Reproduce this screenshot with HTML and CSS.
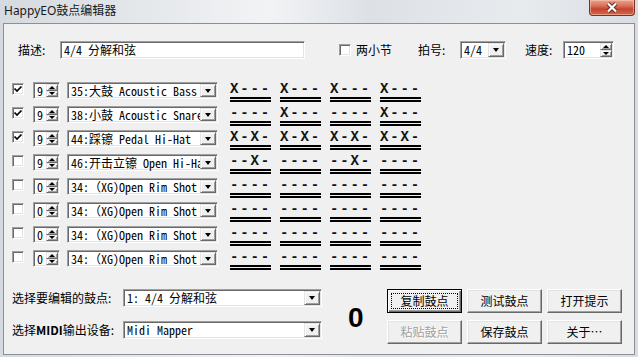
FILE: index.html
```html
<!DOCTYPE html>
<html lang="zh-CN">
<head>
<meta charset="utf-8">
<title>HappyEO鼓点编辑器</title>
<link rel="stylesheet" href="styles.css">
</head>
<body>
<div class="window">
  <div class="titlebar">
    <span class="title">HappyEO鼓点编辑器</span>
    <div class="close">
      <svg width="14" height="11" viewBox="0 0 14 11">
        <path d="M3 1.5 L11 9.5 M11 1.5 L3 9.5" stroke="#6a2c22" stroke-width="4.2" fill="none"/>
        <path d="M3 1.5 L11 9.5 M11 1.5 L3 9.5" stroke="#ffffff" stroke-width="2.2" fill="none"/>
      </svg>
    </div>
  </div>
  <div class="client">
    <div class="toprow">
      <span class="lbl lbl-desc">描述:</span>
      <div class="field sunken desc"><span class="mono">4/4 分解和弦</span></div>
      <div class="check-wrap"><span class="checkbox"></span><span class="lbl">两小节</span></div>
      <span class="lbl lbl-meter">拍号:</span>
      <div class="combo sunken meter"><span class="mono">4/4</span><span class="dropbtn"><i class="tri-down"></i></span></div>
      <span class="lbl lbl-tempo">速度:</span>
      <div class="spin sunken tempo"><span class="mono">120</span><span class="spinbtn"><span class="half"><i class="tri-up"></i></span><span class="half"><i class="tri-down small"></i></span></span></div>
    </div>

    <div class="tracks">
      <div class="track">
        <span class="checkbox"><svg width="10" height="10" viewBox="0 0 10 10"><path d="M1.5 4.5 L4 7 L8.5 2.5" stroke="#000" stroke-width="1.7" fill="none"/></svg></span>
        <div class="spin sunken vol"><span class="mono">9</span><span class="spinbtn"><span class="half"><i class="tri-up"></i></span><span class="half"><i class="tri-down small"></i></span></span></div>
        <div class="combo sunken inst"><span class="mono">35:大鼓 Acoustic Bass</span><span class="dropbtn"><i class="tri-down"></i></span></div>
        <div class="pats">
          <div class="pat"><div class="pat-text">X---</div><div class="pat-lines"></div></div>
          <div class="pat"><div class="pat-text">X---</div><div class="pat-lines"></div></div>
          <div class="pat"><div class="pat-text">X---</div><div class="pat-lines"></div></div>
          <div class="pat"><div class="pat-text">X---</div><div class="pat-lines"></div></div>
        </div>
      </div>
      <div class="track">
        <span class="checkbox"><svg width="10" height="10" viewBox="0 0 10 10"><path d="M1.5 4.5 L4 7 L8.5 2.5" stroke="#000" stroke-width="1.7" fill="none"/></svg></span>
        <div class="spin sunken vol"><span class="mono">9</span><span class="spinbtn"><span class="half"><i class="tri-up"></i></span><span class="half"><i class="tri-down small"></i></span></span></div>
        <div class="combo sunken inst"><span class="mono">38:小鼓 Acoustic Snare</span><span class="dropbtn"><i class="tri-down"></i></span></div>
        <div class="pats">
          <div class="pat"><div class="pat-text">----</div><div class="pat-lines"></div></div>
          <div class="pat"><div class="pat-text">X---</div><div class="pat-lines"></div></div>
          <div class="pat"><div class="pat-text">----</div><div class="pat-lines"></div></div>
          <div class="pat"><div class="pat-text">X---</div><div class="pat-lines"></div></div>
        </div>
      </div>
      <div class="track">
        <span class="checkbox"><svg width="10" height="10" viewBox="0 0 10 10"><path d="M1.5 4.5 L4 7 L8.5 2.5" stroke="#000" stroke-width="1.7" fill="none"/></svg></span>
        <div class="spin sunken vol"><span class="mono">9</span><span class="spinbtn"><span class="half"><i class="tri-up"></i></span><span class="half"><i class="tri-down small"></i></span></span></div>
        <div class="combo sunken inst"><span class="mono">44:踩镲 Pedal Hi-Hat</span><span class="dropbtn"><i class="tri-down"></i></span></div>
        <div class="pats">
          <div class="pat"><div class="pat-text">X-X-</div><div class="pat-lines"></div></div>
          <div class="pat"><div class="pat-text">X-X-</div><div class="pat-lines"></div></div>
          <div class="pat"><div class="pat-text">X-X-</div><div class="pat-lines"></div></div>
          <div class="pat"><div class="pat-text">X-X-</div><div class="pat-lines"></div></div>
        </div>
      </div>
      <div class="track">
        <span class="checkbox"></span>
        <div class="spin sunken vol"><span class="mono">9</span><span class="spinbtn"><span class="half"><i class="tri-up"></i></span><span class="half"><i class="tri-down small"></i></span></span></div>
        <div class="combo sunken inst"><span class="mono">46:开击立镲 Open Hi-Hat</span><span class="dropbtn"><i class="tri-down"></i></span></div>
        <div class="pats">
          <div class="pat"><div class="pat-text">--X-</div><div class="pat-lines"></div></div>
          <div class="pat"><div class="pat-text">----</div><div class="pat-lines"></div></div>
          <div class="pat"><div class="pat-text">--X-</div><div class="pat-lines"></div></div>
          <div class="pat"><div class="pat-text">----</div><div class="pat-lines"></div></div>
        </div>
      </div>
      <div class="track">
        <span class="checkbox"></span>
        <div class="spin sunken vol"><span class="mono">0</span><span class="spinbtn"><span class="half"><i class="tri-up"></i></span><span class="half"><i class="tri-down small"></i></span></span></div>
        <div class="combo sunken inst"><span class="mono">34:（XG)Open Rim Shot</span><span class="dropbtn"><i class="tri-down"></i></span></div>
        <div class="pats">
          <div class="pat"><div class="pat-text">----</div><div class="pat-lines"></div></div>
          <div class="pat"><div class="pat-text">----</div><div class="pat-lines"></div></div>
          <div class="pat"><div class="pat-text">----</div><div class="pat-lines"></div></div>
          <div class="pat"><div class="pat-text">----</div><div class="pat-lines"></div></div>
        </div>
      </div>
      <div class="track">
        <span class="checkbox"></span>
        <div class="spin sunken vol"><span class="mono">0</span><span class="spinbtn"><span class="half"><i class="tri-up"></i></span><span class="half"><i class="tri-down small"></i></span></span></div>
        <div class="combo sunken inst"><span class="mono">34:（XG)Open Rim Shot</span><span class="dropbtn"><i class="tri-down"></i></span></div>
        <div class="pats">
          <div class="pat"><div class="pat-text">----</div><div class="pat-lines"></div></div>
          <div class="pat"><div class="pat-text">----</div><div class="pat-lines"></div></div>
          <div class="pat"><div class="pat-text">----</div><div class="pat-lines"></div></div>
          <div class="pat"><div class="pat-text">----</div><div class="pat-lines"></div></div>
        </div>
      </div>
      <div class="track">
        <span class="checkbox"></span>
        <div class="spin sunken vol"><span class="mono">0</span><span class="spinbtn"><span class="half"><i class="tri-up"></i></span><span class="half"><i class="tri-down small"></i></span></span></div>
        <div class="combo sunken inst"><span class="mono">34:（XG)Open Rim Shot</span><span class="dropbtn"><i class="tri-down"></i></span></div>
        <div class="pats">
          <div class="pat"><div class="pat-text">----</div><div class="pat-lines"></div></div>
          <div class="pat"><div class="pat-text">----</div><div class="pat-lines"></div></div>
          <div class="pat"><div class="pat-text">----</div><div class="pat-lines"></div></div>
          <div class="pat"><div class="pat-text">----</div><div class="pat-lines"></div></div>
        </div>
      </div>
      <div class="track">
        <span class="checkbox"></span>
        <div class="spin sunken vol"><span class="mono">0</span><span class="spinbtn"><span class="half"><i class="tri-up"></i></span><span class="half"><i class="tri-down small"></i></span></span></div>
        <div class="combo sunken inst"><span class="mono">34:（XG)Open Rim Shot</span><span class="dropbtn"><i class="tri-down"></i></span></div>
        <div class="pats">
          <div class="pat"><div class="pat-text">----</div><div class="pat-lines"></div></div>
          <div class="pat"><div class="pat-text">----</div><div class="pat-lines"></div></div>
          <div class="pat"><div class="pat-text">----</div><div class="pat-lines"></div></div>
          <div class="pat"><div class="pat-text">----</div><div class="pat-lines"></div></div>
        </div>
      </div>
    </div>

    <div class="bottom">
      <div class="selects">
        <div class="sel-row">
          <span class="lbl sel-lbl">选择要编辑的鼓点:</span>
          <div class="combo sunken wide"><span class="mono">1: 4/4 分解和弦</span><span class="dropbtn"><i class="tri-down"></i></span></div>
        </div>
        <div class="sel-row">
          <span class="lbl sel-lbl">选择<b class="midi">MIDI</b>输出设备:</span>
          <div class="combo sunken wide"><span class="mono">Midi Mapper</span><span class="dropbtn"><i class="tri-down"></i></span></div>
        </div>
      </div>
      <div class="count">0</div>
      <div class="buttons">
        <div class="btn default"><span class="focus">复制鼓点</span></div>
        <div class="btn">测试鼓点</div>
        <div class="btn">打开提示</div>
        <div class="btn disabled">粘贴鼓点</div>
        <div class="btn">保存鼓点</div>
        <div class="btn">关于…</div>
      </div>
    </div>
  </div>
</div>
</body>
</html>
```

FILE: styles.css
```css
* { box-sizing: border-box; }
html, body { margin: 0; padding: 0; }
body {
  width: 638px;
  height: 357px;
  overflow: hidden;
  font-family: "Noto Sans CJK SC", sans-serif;
  font-size: 12px;
  color: #000;
  background: #dfe3e8;
}
.window {
  width: 638px;
  height: 357px;
  display: flex;
  flex-direction: column;
  padding: 0 3px 2px 3px;
  background: linear-gradient(to right, #d5dae0 0%, #e6e9ec 25%, #f2f3f5 42%, #dde1e6 58%, #e8ebee 82%, #d9dde2 100%);
}
.titlebar {
  height: 23px;
  display: flex;
  justify-content: space-between;
  align-items: flex-start;
  flex: none;
}
.title {
  margin-top: 3px;
  margin-left: 1px;
  font-family: "Noto Sans", "Noto Sans CJK SC", sans-serif;
  font-size: 12px;
  line-height: 16px;
  color: #1a1a1a;
}
.close {
  width: 46px;
  height: 16px;
  border: 1px solid #7a3024;
  border-top: none;
  border-radius: 0 0 4px 4px;
  background: linear-gradient(to bottom, #e8a38f 0%, #d8705a 40%, #c4442c 60%, #d2694e 100%);
  box-shadow: inset 0 0 0 1px rgba(255, 210, 190, 0.5);
  display: flex;
  align-items: center;
  justify-content: center;
}

.client {
  flex: 1;
  background: #f0f0f0;
  border: 1px solid #8c9096;
  display: flex;
  flex-direction: column;
}

.lbl { line-height: 18px; white-space: nowrap; }
.mono {
  font-family: "Noto Sans Mono CJK SC", "DejaVu Sans Mono", monospace;
  font-size: 12px;
  line-height: 18px;
  height: 18px;
  white-space: nowrap;
  overflow-x: clip;
}

.sunken {
  background: #fff;
  border: 1px solid;
  border-color: #a0a0a0 #ffffff #ffffff #a0a0a0;
  box-shadow: inset 1px 1px 0 #696969, inset -1px -1px 0 #e3e3e3;
  padding: 0 1px 0 2px;
  display: flex;
  align-items: center;
}
.field .mono, .combo .mono, .spin .mono { flex: 1; min-width: 0; padding-left: 1px; }

.dropbtn, .spinbtn .half {
  background: #f0f0f0;
  border: 1px solid;
  border-color: #e3e3e3 #696969 #696969 #e3e3e3;
  box-shadow: inset 1px 1px 0 #fff, inset -1px -1px 0 #a0a0a0;
  display: flex;
  align-items: center;
  justify-content: center;
}
.dropbtn { flex: none; width: 16px; height: calc(100% - 2px); }
.spinbtn { flex: none; width: 12px; height: calc(100% - 2px); display: flex; flex-direction: column; }
.spinbtn .half { flex: 1; }
.tri-down, .tri-up { display: block; width: 0; height: 0; border-left: 3.5px solid transparent; border-right: 3.5px solid transparent; }
.tri-down { border-top: 4px solid #000; }
.tri-up { border-bottom: 3px solid #000; border-left-width: 3px; border-right-width: 3px; }
.tri-down.small { border-top-width: 3px; border-left-width: 3px; border-right-width: 3px; }

.checkbox {
  flex: none;
  width: 12px;
  height: 12px;
  background: #fff;
  border: 1px solid;
  border-color: #a0a0a0 #ffffff #ffffff #a0a0a0;
  box-shadow: inset 1px 1px 0 #696969, inset -1px -1px 0 #e3e3e3;
  display: flex;
  align-items: center;
  justify-content: center;
}

/* top row */
.toprow {
  display: flex;
  align-items: center;
  height: 18px;
  margin-top: 17px;
  padding-left: 14px;
}
.lbl-desc { width: 42px; }
.desc { width: 245px; height: 18px; }
.check-wrap { display: flex; align-items: center; margin-left: 34px; gap: 5px; }
.lbl-meter { margin-left: 26px; width: 42px; }
.meter { width: 46px; height: 18px; }
.lbl-tempo { margin-left: 19px; width: 38px; }
.tempo { width: 51px; height: 18px; }

/* tracks */
.tracks {
  margin-top: 23px;
  display: flex;
  flex-direction: column;
}
.track {
  height: 24px;
  display: flex;
  align-items: flex-start;
  padding-left: 8px;
}
.track .checkbox { margin-top: 1px; }
.vol { width: 27px; height: 17px; margin-left: 9px; }
.inst { width: 151px; height: 17px; margin-left: 7px; }
.pats { display: flex; gap: 9px; margin-left: 12px; }
.pat { width: 41px; }
.pat-text {
  font-family: "Liberation Mono", monospace;
  font-weight: bold;
  font-size: 14px;
  line-height: 14px;
  letter-spacing: 1.85px;
  color: #111;
  white-space: nowrap;
}
.pat-lines {
  height: 5px;
  margin-top: 1px;
  border-top: 2px solid #000;
  border-bottom: 2px solid #000;
}

/* bottom */
.bottom {
  display: flex;
  align-items: flex-start;
  margin-top: 15px;
  padding-left: 8px;
}
.selects { display: flex; flex-direction: column; gap: 14px; }
.sel-row { display: flex; align-items: center; height: 18px; }
.sel-lbl { width: 111px; }
.midi { font-weight: bold; }
.wide { width: 199px; height: 18px; }
.count {
  margin-left: 26px;
  margin-top: 13px;
  width: 16px;
  font-family: "Liberation Sans", Arial, sans-serif;
  font-weight: bold;
  font-size: 28px;
  line-height: 32px;
}
.buttons {
  margin-left: 23px;
  display: grid;
  grid-template-columns: repeat(3, 75px);
  grid-auto-rows: 24px;
  column-gap: 5px;
  row-gap: 7px;
}
.btn {
  background: #f0f0f0;
  border: 1px solid;
  border-color: #ffffff #696969 #696969 #ffffff;
  box-shadow: inset -1px -1px 0 #a0a0a0, inset 1px 1px 0 #e3e3e3;
  display: flex;
  align-items: center;
  justify-content: center;
  line-height: 18px;
  white-space: nowrap;
}
.btn.default {
  border-color: #000;
  box-shadow: inset 1px 1px 0 #fff, inset -1px -1px 0 #696969, inset -2px -2px 0 #a0a0a0;
  padding: 3px;
}
.btn.default .focus {
  flex: 1;
  align-self: stretch;
  display: flex;
  align-items: center;
  justify-content: center;
  border: 1px dotted #000;
}
.btn.disabled { color: #a0a0a0; text-shadow: 1px 1px 0 #fff; }
```
